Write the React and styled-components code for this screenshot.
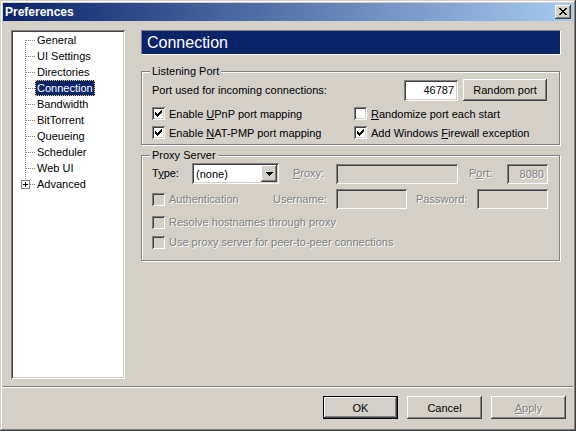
import styled, { createGlobalStyle, css } from "styled-components";

const face = "#D4D0C8";
const navy = "#0A246A";

const GlobalStyle = createGlobalStyle`
  html, body {
    margin: 0;
    padding: 0;
    background: ${face};
  }
  body {
    font-family: "Liberation Sans", Arial, sans-serif;
    font-size: 11px;
    color: #000;
  }
`;

const sunken = css`
  box-shadow: inset 1px 1px #808080, inset -1px -1px #fff, inset 2px 2px #404040,
    inset -2px -2px ${face};
`;

const raised = css`
  box-shadow: inset -1px -1px #404040, inset 1px 1px #fff, inset -2px -2px #808080,
    inset 2px 2px ${face};
`;

const disabledText = css`
  color: #808080;
  text-shadow: 1px 1px 0 #fff;
`;

const Window = styled.div`
  width: 576px;
  height: 431px;
  box-sizing: border-box;
  padding: 3px;
  background: ${face};
  box-shadow: inset -1px -1px #404040, inset 1px 1px ${face}, inset -2px -2px #808080,
    inset 2px 2px #fff;
  display: flex;
  flex-direction: column;
`;

const TitleBar = styled.div`
  height: 18px;
  padding: 0 2px;
  display: flex;
  align-items: center;
  justify-content: space-between;
  background: linear-gradient(to right, ${navy}, #a6caf0);
  color: #fff;
  font-weight: bold;
  font-size: 12px;
`;

const CloseButton = styled.div`
  width: 16px;
  height: 14px;
  box-sizing: border-box;
  padding: 0 1px 1px 0;
  background: ${face};
  ${raised}
  display: flex;
  align-items: center;
  justify-content: center;
`;

const Body = styled.div`
  display: flex;
  gap: 16px;
  padding: 9px 0 0 8px;
`;

const Tree = styled.div`
  width: 114px;
  height: 349px;
  box-sizing: border-box;
  padding: 2px;
  background: #fff;
  ${sunken}
`;

const TreeRow = styled.div`
  display: flex;
  align-items: center;
  height: 16px;
`;

const TreeLabel = styled.span`
  height: 16px;
  box-sizing: border-box;
  padding: 0 1px;
  line-height: 14px;
  border: 1px dotted ${(p) => (p.$selected ? "#e8d27a" : "transparent")};
  background: ${(p) => (p.$selected ? navy : "transparent")};
  color: ${(p) => (p.$selected ? "#fff" : "#000")};
  white-space: nowrap;
`;

const Panel = styled.div`
  width: 420px;
  display: flex;
  flex-direction: column;
`;

const Header = styled.div`
  height: 25px;
  box-sizing: border-box;
  padding-left: 5px;
  display: flex;
  align-items: center;
  background: ${navy};
  color: #fff;
  font-size: 16px;
  border-top: 1px solid #808080;
  border-left: 1px solid #808080;
  border-bottom: 1px solid #fff;
  border-right: 1px solid #fff;
`;

const Group = styled.div`
  position: relative;
  margin-top: ${(p) => p.$top}px;
  width: 419px;
  box-sizing: border-box;
  border: 1px solid #808080;
  box-shadow: 1px 1px 0 #fff, inset 1px 1px 0 #fff;
  padding: ${(p) => p.$pad};
  display: flex;
  flex-direction: column;
`;

const Legend = styled.span`
  position: absolute;
  top: -7px;
  left: 8px;
  padding: 0 2px;
  line-height: 13px;
  background: ${face};
`;

const Row = styled.div`
  display: flex;
  align-items: center;
  height: ${(p) => p.$h}px;
  margin-top: ${(p) => p.$gap || 0}px;
`;

const Text = styled.span`
  line-height: 13px;
  white-space: nowrap;
  width: ${(p) => (p.$w ? `${p.$w}px` : "auto")};
  margin-left: ${(p) => p.$ml || 0}px;
  flex: none;
  ${(p) => p.$disabled && disabledText}
`;

const Field = styled.div`
  flex: none;
  width: ${(p) => p.$w}px;
  height: ${(p) => p.$h || 20}px;
  margin-left: ${(p) => p.$ml || 0}px;
  box-sizing: border-box;
  padding: 2px 4px 2px 3px;
  display: flex;
  align-items: center;
  justify-content: ${(p) => (p.$right ? "flex-end" : "flex-start")};
  background: ${(p) => (p.$disabled ? face : "#fff")};
  ${sunken}
  ${(p) => p.$disabled && disabledText}
`;

const Combo = styled(Field)`
  padding: 2px;
  justify-content: space-between;
`;

const ComboText = styled.span`
  padding-left: 2px;
`;

const DropButton = styled.div`
  width: 16px;
  height: 17px;
  box-sizing: border-box;
  background: ${face};
  ${raised}
  display: flex;
  align-items: center;
  justify-content: center;
`;

const Button = styled.div`
  flex: none;
  width: ${(p) => p.$w || 75}px;
  height: ${(p) => p.$h || 23}px;
  margin-left: ${(p) => p.$ml || 0}px;
  box-sizing: border-box;
  display: flex;
  align-items: center;
  justify-content: center;
  background: ${face};
  ${(p) =>
    p.$default
      ? css`
          box-shadow: inset 0 0 0 1px #000, inset -2px -2px #404040, inset 2px 2px #fff,
            inset -3px -3px #808080;
        `
      : raised}
  ${(p) => p.$disabled && disabledText}
`;

const Spacer = styled.div`
  flex: 1;
`;

const CheckGrid = styled.div`
  display: grid;
  grid-template-columns: 202px 1fr;
  grid-auto-rows: 19px;
  margin-top: 3px;
`;

const CheckWrap = styled.label`
  display: flex;
  align-items: center;
  gap: 4px;
  width: ${(p) => (p.$w ? `${p.$w}px` : "auto")};
  flex: none;
  white-space: nowrap;
  ${(p) => p.$disabled && disabledText}
`;

const Box = styled.span`
  width: 13px;
  height: 13px;
  box-sizing: border-box;
  padding: 3px;
  display: flex;
  background: ${(p) => (p.$disabled ? face : "#fff")};
  ${sunken}
`;

const Separator = styled.div`
  margin-top: 7px;
  height: 0;
  border-top: 1px solid #808080;
  border-bottom: 1px solid #fff;
`;

const Footer = styled.div`
  display: flex;
  justify-content: flex-end;
  gap: 9px;
  padding: 8px 7px 0 0;
`;

const CheckMark = () => (
  <svg width="7" height="7" viewBox="0 0 7 7" shapeRendering="crispEdges">
    <path
      d="M0 2h1v3H0zM1 3h1v3H1zM2 4h1v3H2zM3 3h1v3H3zM4 2h1v3H4zM5 1h1v3H5zM6 0h1v3H6z"
      fill="#000"
    />
  </svg>
);

const CloseGlyph = () => (
  <svg width="8" height="7" viewBox="0 0 8 7" shapeRendering="crispEdges">
    <path
      d="M0 0h2v1H0zM6 0h2v1H6zM1 1h2v1H1zM5 1h2v1H5zM2 2h4v1H2zM3 3h2v1H3zM2 4h4v1H2zM1 5h2v1H1zM5 5h2v1H5zM0 6h2v1H0zM6 6h2v1H6z"
      fill="#000"
    />
  </svg>
);

const DropArrow = () => (
  <svg width="7" height="4" viewBox="0 0 7 4" shapeRendering="crispEdges">
    <path d="M0 0h7v1H0zM1 1h5v1H1zM2 2h3v1H2zM3 3h1v1H3z" fill="#000" />
  </svg>
);

// connector lines of the tree: first item starts at its middle, last has the + box
const TreeLines = ({ kind }) => (
  <svg width="22" height="16" viewBox="0 0 22 16" shapeRendering="crispEdges" style={{ flex: "none" }}>
    {kind === "first" && <path d="M12.5 8V16" stroke="#808080" strokeDasharray="1 1" />}
    {kind === "middle" && <path d="M12.5 0V16" stroke="#808080" strokeDasharray="1 1" />}
    {kind === "last" ? (
      <>
        <path d="M12.5 0V4" stroke="#808080" strokeDasharray="1 1" />
        <rect x="8.5" y="4.5" width="8" height="8" fill="#fff" stroke="#808080" />
        <path d="M10 8.5H15M12.5 6V11" stroke="#000" />
        <path d="M17 8.5H22" stroke="#808080" strokeDasharray="1 1" />
      </>
    ) : (
      <path d="M13 8.5H22" stroke="#808080" strokeDasharray="1 1" />
    )}
  </svg>
);

const Checkbox = ({ checked, disabled, w, children }) => (
  <CheckWrap $w={w} $disabled={disabled}>
    <Box $disabled={disabled}>{checked && <CheckMark />}</Box>
    <span>{children}</span>
  </CheckWrap>
);

const pages = [
  "General",
  "UI Settings",
  "Directories",
  "Connection",
  "Bandwidth",
  "BitTorrent",
  "Queueing",
  "Scheduler",
  "Web UI",
  "Advanced",
];

export default function App() {
  return (
    <>
      <GlobalStyle />
      <Window>
        <TitleBar>
          <span>Preferences</span>
          <CloseButton>
            <CloseGlyph />
          </CloseButton>
        </TitleBar>

        <Body>
          <Tree>
            {pages.map((name, i) => (
              <TreeRow key={name}>
                <TreeLines kind={i === 0 ? "first" : i === pages.length - 1 ? "last" : "middle"} />
                <TreeLabel $selected={name === "Connection"}>{name}</TreeLabel>
              </TreeRow>
            ))}
          </Tree>

          <Panel>
            <Header>Connection</Header>

            <Group $top={16} $pad="7px 12px 2px 10px">
              <Legend>Listening Port</Legend>
              <Row $h={22}>
                <Text>Port used for incoming connections:</Text>
                <Spacer />
                <Field $w={54} $h={21} $right>
                  46787
                </Field>
                <Button $w={84} $h={22} $ml={5}>
                  Random port
                </Button>
              </Row>
              <CheckGrid>
                <Checkbox checked>
                  Enable <u>U</u>PnP port mapping
                </Checkbox>
                <Checkbox>
                  <u>R</u>andomize port each start
                </Checkbox>
                <Checkbox checked>
                  Enable <u>N</u>AT-PMP port mapping
                </Checkbox>
                <Checkbox checked>
                  Add Windows <u>F</u>irewall exception
                </Checkbox>
              </CheckGrid>
            </Group>

            <Group $top={10} $pad="7px 12px 8px 10px">
              <Legend>Proxy Server</Legend>
              <Row $h={21}>
                <Text $w={40}>
                  T<u>y</u>pe:
                </Text>
                <Combo $w={87} $h={21}>
                  <ComboText>(none)</ComboText>
                  <DropButton>
                    <DropArrow />
                  </DropButton>
                </Combo>
                <Text $w={43} $ml={14} $disabled>
                  <u>P</u>roxy:
                </Text>
                <Field $w={122} $disabled />
                <Text $w={38} $ml={11} $disabled>
                  P<u>o</u>rt:
                </Text>
                <Field $w={41} $disabled $right>
                  8080
                </Field>
              </Row>
              <Row $h={20} $gap={5}>
                <Checkbox w={121} disabled>
                  Authentication
                </Checkbox>
                <Text $w={63} $disabled>
                  Username:
                </Text>
                <Field $w={71} $disabled />
                <Text $w={61} $ml={9} $disabled>
                  Password:
                </Text>
                <Field $w={71} $disabled />
              </Row>
              <Row $h={20} $gap={3}>
                <Checkbox disabled>Resolve hostnames through proxy</Checkbox>
              </Row>
              <Row $h={20}>
                <Checkbox disabled>Use proxy server for peer-to-peer connections</Checkbox>
              </Row>
            </Group>
          </Panel>
        </Body>

        <Separator />
        <Footer>
          <Button $default>OK</Button>
          <Button>Cancel</Button>
          <Button $disabled>
            <u>A</u>pply
          </Button>
        </Footer>
      </Window>
    </>
  );
}
